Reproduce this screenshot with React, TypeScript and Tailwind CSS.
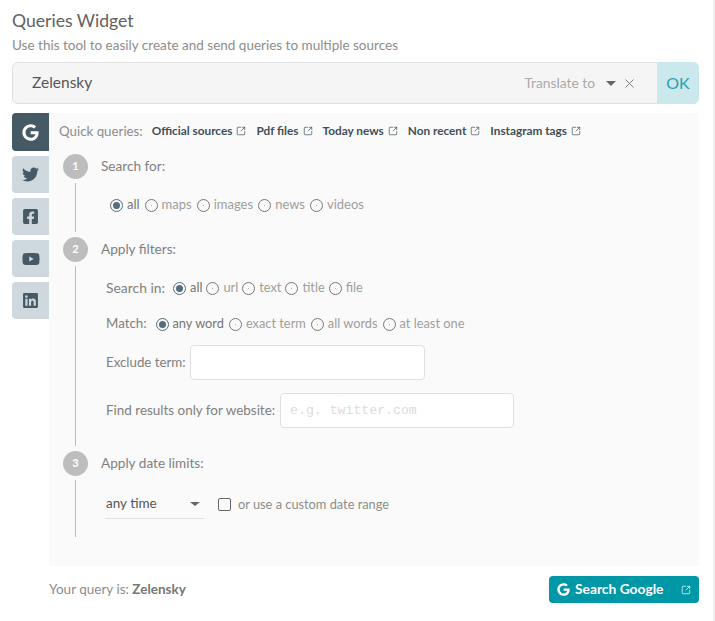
import { ReactNode } from "react";
import { FaFacebookSquare, FaGoogle, FaLinkedin, FaTwitter, FaYoutube } from "react-icons/fa";
import { SquareArrowOutUpRight, X } from "lucide-react";

const quickQueries = ["Official sources", "Pdf files", "Today news", "Non recent", "Instagram tags"];

function Radio({ label, checked, tight }: { label: string; checked?: boolean; tight?: boolean }) {
  return (
    <span className={`flex items-center ${tight ? "mr-[4px]" : "mr-[5px]"}`}>
      <span
        className={`flex h-[13px] w-[13px] items-center justify-center rounded-full border ${
          checked ? "border-[#546e7a]" : "border-[#777]"
        }`}
      >
        <span className={checked ? "h-[7px] w-[7px] rounded-full bg-[#546e7a]" : "h-px w-px rounded-full bg-[#999]"} />
      </span>
      <span className={`ml-[4px] ${checked ? "text-[#757575]" : "text-[#9e9e9e]"}`}>{label}</span>
    </span>
  );
}

function Step({ num, title, height, children }: { num: number; title: string; height: string; children: ReactNode }) {
  return (
    <div className={`flex ${height}`}>
      <div className="flex w-[25px] flex-col items-center">
        <div className="flex h-[25px] w-[25px] shrink-0 items-center justify-center rounded-full bg-[#bdbdbd] text-[11px] font-bold text-white">
          {num}
        </div>
        <div className="mt-[4px] w-px flex-1 bg-[#bdbdbd]" />
      </div>
      <div className="ml-[13px] flex-1">
        <div className="flex h-[25px] items-center text-[13.6px] text-[#808080]">{title}</div>
        {children}
      </div>
    </div>
  );
}

function Tab({ children, active }: { children: ReactNode; active?: boolean }) {
  return (
    <div
      className={`flex w-[37px] items-center justify-center rounded-l-[4px] ${
        active ? "h-[38px] bg-[#455a64] text-white" : "h-[37px] bg-[#cfd8dc] text-[#455a64]"
      }`}
    >
      {children}
    </div>
  );
}

export default function App() {
  return (
    <div className="h-[621px] w-[715px] overflow-hidden border-r-2 border-[#f1f1f1] bg-white pl-[12px] pr-[14px] font-['Lato',sans-serif]">
      <h1 className="pt-[11px] text-[17.6px] leading-[20px] text-[#616161]">Queries Widget</h1>
      <p className="mt-[4px] text-[13.5px] leading-[20px] text-[#8c8c8c]">
        Use this tool to easily create and send queries to multiple sources
      </p>

      <div className="mt-[7px] flex h-[42px] rounded-[6px] border border-[#e0e0e0] bg-[#f5f5f5]">
        <div className="flex flex-1 items-center pl-[19px] text-[15.5px] text-[#555]">Zelensky</div>
        <div className="flex items-center text-[13.8px] text-[#aaa]">Translate to</div>
        <div className="ml-[11px] flex items-center gap-[6px] pr-[20px] text-[#777]">
          <span className="h-0 w-0 border-x-[5px] border-t-[5px] border-x-transparent border-t-[#666]" />
          <X size={15} strokeWidth={1.5} />
        </div>
        <div className="-my-px -mr-px flex w-[42px] items-center justify-center rounded-r-[6px] bg-[#cbe9ec] text-[16px] text-[#26a1ae]">
          OK
        </div>
      </div>

      <div className="mt-[9px] flex">
        <div className="flex w-[37px] flex-col gap-[5px]">
          <Tab active>
            <FaGoogle size={17} />
          </Tab>
          <Tab>
            <FaTwitter size={17} />
          </Tab>
          <Tab>
            <FaFacebookSquare size={17} />
          </Tab>
          <Tab>
            <FaYoutube size={18} />
          </Tab>
          <Tab>
            <FaLinkedin size={17} />
          </Tab>
        </div>

        <div className="h-[453px] flex-1 bg-[#fafafa] pl-[14px]">
          <div className="-ml-[4px] flex h-[41px] items-start pt-[8px]">
            <span className="mr-[9px] text-[13.3px] leading-[20px] text-[#8c8c8c]">Quick queries:</span>
            <div className="mt-px flex gap-[10px]">
              {quickQueries.map((q) => (
                <span key={q} className="flex items-center gap-[4px] text-[11.8px] font-bold leading-[18px] text-[#3f4f58]">
                  {q}
                  <SquareArrowOutUpRight size={10} strokeWidth={1.7} />
                </span>
              ))}
            </div>
          </div>

          <div className="flex flex-col gap-[5px]">
            <Step num={1} title="Search for:" height="h-[78px]">
              <div className="ml-[9px] mt-[16px] flex h-[20px] items-center text-[13px]">
                <Radio label="all" checked />
                <Radio label="maps" />
                <Radio label="images" />
                <Radio label="news" />
                <Radio label="videos" />
              </div>
            </Step>

            <Step num={2} title="Apply filters:" height="h-[209px]">
              <div className="ml-[5px] text-[12.8px] text-[#808080]">
                <div className="mt-[16px] flex h-[20px] items-center">
                  <span className="mr-[8px] text-[13.9px]">Search in:</span>
                  <Radio label="all" checked tight />
                  <Radio label="url" tight />
                  <Radio label="text" tight />
                  <Radio label="title" tight />
                  <Radio label="file" tight />
                </div>
                <div className="mt-[16px] flex h-[20px] items-center">
                  <span className="mr-[9px] text-[13.3px]">Match:</span>
                  <Radio label="any word" checked />
                  <Radio label="exact term" />
                  <Radio label="all words" />
                  <Radio label="at least one" />
                </div>
                <div className="mt-[11px] flex items-center">
                  <span className="mr-[4px] text-[13.3px]">Exclude term:</span>
                  <div className="h-[35px] w-[235px] rounded-[4px] border border-[#e0e0e0] bg-white" />
                </div>
                <div className="mt-[13px] flex items-center">
                  <span className="mr-[5px] text-[13.45px]">Find results only for website:</span>
                  <div className="flex h-[35px] w-[234px] items-center rounded-[4px] border border-[#e0e0e0] bg-white pl-[9px] font-['Liberation_Mono',monospace] text-[13.2px] text-[#dcdcdc]">
                    e.g. twitter.com
                  </div>
                </div>
              </div>
            </Step>

            <Step num={3} title="Apply date limits:" height="h-[86px]">
              <div className="ml-[4px] mt-[14px] flex items-start text-[13px]">
                <div className="flex h-[29px] w-[99px] items-center justify-between border-b border-[#e0e0e0] pb-px pl-px pr-[4px] text-[13.5px] text-[#555]">
                  any time
                  <span className="h-0 w-0 border-x-[5px] border-t-[4px] border-x-transparent border-t-[#666]" />
                </div>
                <div className="ml-[14px] flex h-[29px] items-center text-[12.8px] text-[#8c8c8c]">
                  <span className="mr-[7px] h-[13px] w-[13px] rounded-[2px] border border-[#666]" />
                  or use a custom date range
                </div>
              </div>
            </Step>
          </div>
        </div>
      </div>

      <div className="ml-[37px] mt-[10px] flex items-center justify-between">
        <span className="text-[13.5px] text-[#8c8c8c]">
          Your query is: <b className="text-[#777]">Zelensky</b>
        </span>
        <div className="flex h-[27px] w-[150px] items-center rounded-[4px] bg-[#0097a7] px-[8px] text-[13.8px] font-bold text-white">
          <FaGoogle size={13} />
          <span className="ml-[5px] flex-1">Search Google</span>
          <SquareArrowOutUpRight size={10} strokeWidth={1.7} />
        </div>
      </div>
    </div>
  );
}
